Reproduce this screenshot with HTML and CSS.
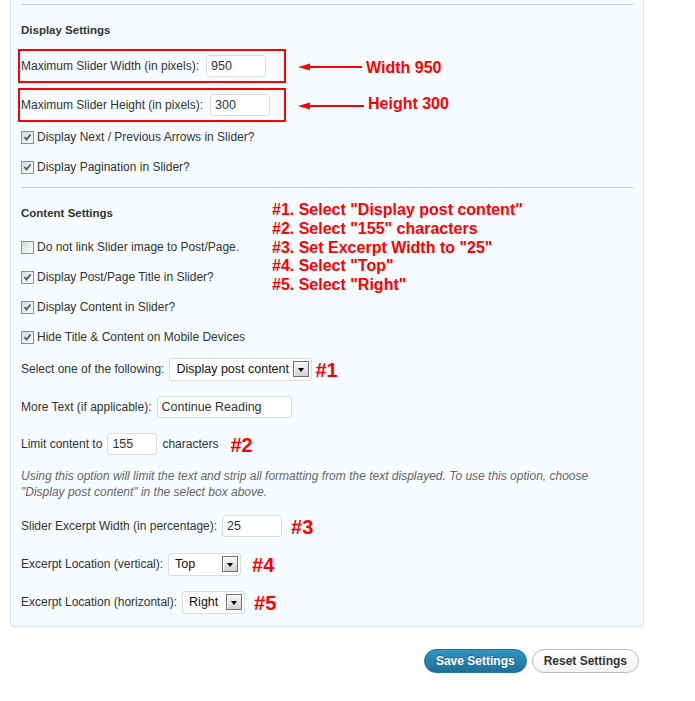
FILE: index.html
```html
<!DOCTYPE html>
<html>
<head>
<meta charset="utf-8">
<title>Slider Settings</title>
<link rel="stylesheet" href="styles.css">
</head>
<body>
<div class="panel">
  <div class="rule"></div>
  <h3 class="section-title">Display Settings</h3>

  <div class="annot-row first">
    <div class="callout">
      <span class="label">Maximum Slider Width (in pixels):</span>
      <input class="text w60" type="text" value="950">
    </div>
    <svg class="arrow" width="64" height="10" viewBox="0 0 64 10"><line x1="10" y1="5" x2="64" y2="5" stroke="#f00" stroke-width="2"/><polygon points="0,5 12,1.5 12,8.5" fill="#f00"/></svg>
    <span class="note">Width 950</span>
  </div>
  <div class="annot-row second">
    <div class="callout">
      <span class="label">Maximum Slider Height (in pixels):</span>
      <input class="text w60" type="text" value="300">
    </div>
    <svg class="arrow" width="66" height="10" viewBox="0 0 66 10"><line x1="10" y1="5" x2="66" y2="5" stroke="#f00" stroke-width="2"/><polygon points="0,5 12,1.5 12,8.5" fill="#f00"/></svg>
    <span class="note">Height 300</span>
  </div>

  <div class="check"><span class="cb"><svg width="11" height="11" viewBox="0 0 11 11"><polyline points="2.5,5 4.5,7.5 8.5,2.5" fill="none" stroke="#4b5d8e" stroke-width="2"/></svg></span><span>Display Next / Previous Arrows in Slider?</span></div>
  <div class="check"><span class="cb"><svg width="11" height="11" viewBox="0 0 11 11"><polyline points="2.5,5 4.5,7.5 8.5,2.5" fill="none" stroke="#4b5d8e" stroke-width="2"/></svg></span><span>Display Pagination in Slider?</span></div>

  <div class="rule rule-mid"></div>

  <div class="content-head">
    <div class="content-left">
      <h3 class="section-title">Content Settings</h3>
      <div class="check-list">
        <div class="check"><span class="cb"></span><span>Do not link Slider image to Post/Page.</span></div>
        <div class="check"><span class="cb"><svg width="11" height="11" viewBox="0 0 11 11"><polyline points="2.5,5 4.5,7.5 8.5,2.5" fill="none" stroke="#4b5d8e" stroke-width="2"/></svg></span><span>Display Post/Page Title in Slider?</span></div>
        <div class="check"><span class="cb"><svg width="11" height="11" viewBox="0 0 11 11"><polyline points="2.5,5 4.5,7.5 8.5,2.5" fill="none" stroke="#4b5d8e" stroke-width="2"/></svg></span><span>Display Content in Slider?</span></div>
        <div class="check"><span class="cb"><svg width="11" height="11" viewBox="0 0 11 11"><polyline points="2.5,5 4.5,7.5 8.5,2.5" fill="none" stroke="#4b5d8e" stroke-width="2"/></svg></span><span>Hide Title &amp; Content on Mobile Devices</span></div>
      </div>
    </div>
    <div class="instructions">
      <div>#1. Select "Display post content"</div>
      <div>#2. Select "155" characters</div>
      <div>#3. Set Excerpt Width to "25"</div>
      <div>#4. Select "Top"</div>
      <div>#5. Select "Right"</div>
    </div>
  </div>

  <div class="form-row r-select">
    <span class="label">Select one of the following:</span>
    <div class="select w143"><span>Display post content</span><span class="drop"></span></div>
    <span class="tag near">#1</span>
  </div>
  <div class="form-row r-more">
    <span class="label">More Text (if applicable):</span>
    <input class="text w135" type="text" value="Continue Reading">
  </div>
  <div class="form-row r-limit">
    <span class="label">Limit content to</span>
    <input class="text w50" type="text" value="155">
    <span class="label">characters</span>
    <span class="tag far">#2</span>
  </div>
  <p class="hint">Using this option will limit the text and strip all formatting from the text displayed. To use this option, choose<br>"Display post content" in the select box above.</p>
  <div class="form-row r-excerpt">
    <span class="label">Slider Excerpt Width (in percentage):</span>
    <input class="text w60" type="text" value="25">
    <span class="tag">#3</span>
  </div>
  <div class="form-row r-loc">
    <span class="label">Excerpt Location (vertical):</span>
    <div class="select w73"><span>Top</span><span class="drop"></span></div>
    <span class="tag mid">#4</span>
  </div>
  <div class="form-row r-loc">
    <span class="label">Excerpt Location (horizontal):</span>
    <div class="select w63"><span>Right</span><span class="drop"></span></div>
    <span class="tag">#5</span>
  </div>
</div>

<div class="actions">
  <button class="btn btn-primary" type="button">Save Settings</button>
  <button class="btn btn-secondary" type="button">Reset Settings</button>
</div>
</body>
</html>
```
FILE: styles.css
```css
body {
  margin: 0;
  background: #fff;
  font-family: "Liberation Sans", Arial, sans-serif;
  font-size: 12px;
  color: #333;
}

.panel {
  margin-left: 10px;
  width: 634px;
  box-sizing: border-box;
  background: #f5fbfe;
  border: 1px solid #d3e4ed;
  border-top: 0;
  border-radius: 0 0 4px 4px;
  padding: 4px 10px 12px 10px;
}

.rule {
  height: 1px;
  background: #cccccc;
}

.rule-mid {
  margin-top: 5px;
}

.section-title {
  margin: 17px 0 0;
  font-size: 11.5px;
  font-weight: bold;
  line-height: 16px;
  color: #333;
}

.annot-row {
  display: flex;
  align-items: center;
}

.annot-row.first { margin-top: 11px; }
.annot-row.second { margin-top: 5px; }

.callout {
  display: flex;
  align-items: center;
  gap: 7px;
  width: 268px;
  height: 34px;
  box-sizing: border-box;
  border: 2px solid #f00;
  margin-left: -3px;
  padding-left: 1px;
}

.arrow {
  margin-left: 12px;
  margin-top: 2px;
  display: block;
}

.note {
  margin-left: 4px;
  margin-top: 3px;
  color: #f00;
  font-weight: bold;
  font-size: 16px;
}

.annot-row.second .arrow { margin-top: 1px; }
.annot-row.second .note { margin-top: -2px; }

.check {
  display: flex;
  align-items: center;
  gap: 3px;
  height: 30px;
}

.cb {
  flex: none;
  width: 13px;
  height: 13px;
  box-sizing: border-box;
  border: 1px solid #8e8f8f;
  background: linear-gradient(135deg, #d8d8d8 0%, #f0f0f0 60%, #fbfbfb 100%);
  display: flex;
  align-items: center;
  justify-content: center;
}

.cb svg { display: block; }

.content-head {
  display: flex;
}

.content-left {
  width: 251px;
}

.check-list {
  margin-top: 11px;
}

.instructions {
  margin-top: 13px;
  color: #f00;
  font-weight: bold;
  font-size: 16px;
  line-height: 18.75px;
}

.form-row {
  display: flex;
  align-items: center;
  gap: 5px;
  height: 24px;
}

.r-select { margin-top: 5px; }
.r-more { margin-top: 14px; }
.r-limit { margin-top: 13px; }
.r-excerpt { margin-top: 13.5px; }
.r-loc { margin-top: 14px; }

.text {
  height: 22px;
  box-sizing: border-box;
  border: 1px solid #dcdcdc;
  border-radius: 3px;
  background: #fff;
  padding: 0 4px;
  margin: 0;
  font-family: "Liberation Sans", Arial, sans-serif;
  font-size: 12.5px;
  color: #333;
}

.w50 { width: 50px; }
.w60 { width: 60px; }
.w135 { width: 135px; }
.w143 { width: 143px; }
.w73 { width: 73px; }
.w63 { width: 63px; }

.select {
  display: flex;
  align-items: center;
  justify-content: space-between;
  height: 23px;
  box-sizing: border-box;
  border: 1px solid #dcdcdc;
  border-radius: 3px;
  background: #fff;
  padding: 0 2px 0 6px;
  font-size: 12.5px;
  color: #111;
}

.drop {
  width: 16px;
  height: 16px;
  box-sizing: border-box;
  border: 1px solid #6f6f6f;
  background: linear-gradient(#f7f7f7, #d2d2d2);
  box-shadow: inset 1px 1px 0 #fff;
  display: flex;
  align-items: center;
  justify-content: center;
}

.drop::after {
  content: "";
  border-left: 3.5px solid transparent;
  border-right: 3.5px solid transparent;
  border-top: 4px solid #000;
  margin-top: 1px;
}

.tag {
  color: #f00;
  font-weight: bold;
  font-size: 20px;
  line-height: 20px;
  margin-top: 2px;
  margin-left: 4px;
}

.tag.near { margin-left: -2px; }
.tag.mid { margin-left: 6px; }
.tag.far { margin-left: 7px; }

.hint {
  margin: 11.5px 0 0;
  font-style: italic;
  font-size: 12px;
  line-height: 16.5px;
  color: #666;
}

.actions {
  display: flex;
  justify-content: flex-end;
  gap: 5px;
  width: 634px;
  margin: 22px 0 0 10px;
  padding-right: 5px;
  box-sizing: border-box;
}

.btn {
  height: 24px;
  box-sizing: border-box;
  padding: 0 11px;
  margin: 0;
  border-radius: 12px;
  font-family: "Liberation Sans", Arial, sans-serif;
  font-size: 12px;
  font-weight: bold;
  display: flex;
  align-items: center;
  cursor: pointer;
}

.btn-primary {
  background: linear-gradient(#3193c4, #1f6f97);
  border: 1px solid #21759b;
  color: #fff;
  text-shadow: 0 -1px 0 rgba(0, 0, 0, 0.3);
}

.btn-secondary {
  background: linear-gradient(#ffffff, #f3f3f3);
  border: 1px solid #bbbbbb;
  color: #333;
}
```
